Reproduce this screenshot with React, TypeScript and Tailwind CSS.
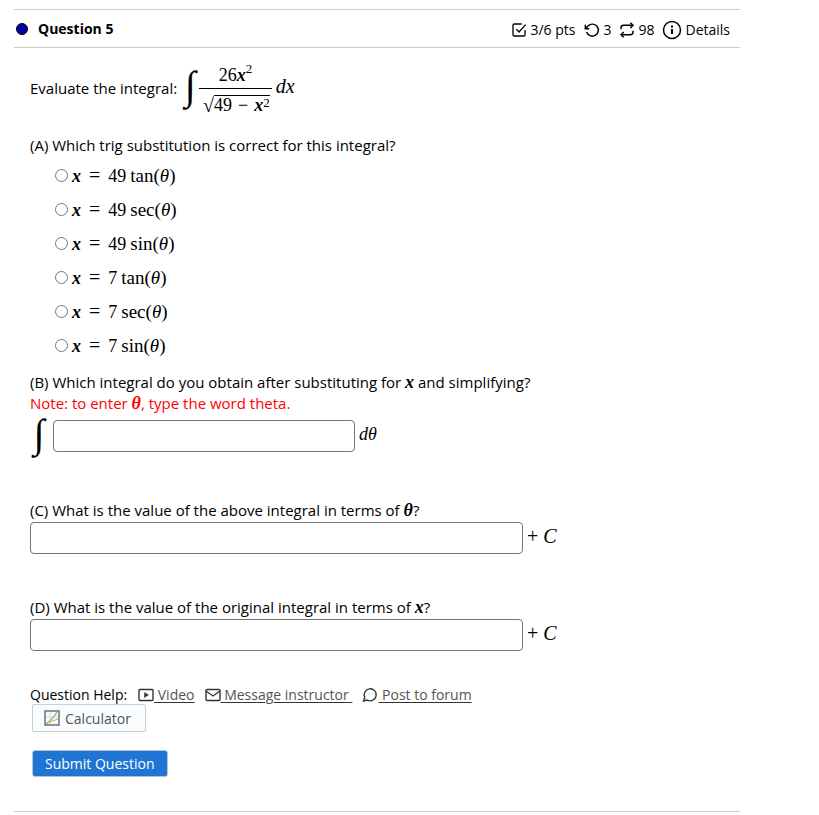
import type { ReactNode } from "react";
import { useState } from "react";

// Answer choices for part (A)
const choices = [
  { coef: "49", fn: "tan" },
  { coef: "49", fn: "sec" },
  { coef: "49", fn: "sin" },
  { coef: "7", fn: "tan" },
  { coef: "7", fn: "sec" },
  { coef: "7", fn: "sin" },
];

const MATH = "font-['Liberation_Serif',serif] leading-none";

function M({ children }: { children: ReactNode }) {
  return <i className={`${MATH} text-[18px] font-bold`}>{children}</i>;
}

function IntegralSign() {
  return (
    <span
      className={`${MATH} flex h-11 w-[18px] shrink-0 items-center justify-center pb-1 text-[40px] italic`}
    >
      ∫
    </span>
  );
}

function CheckSquareIcon() {
  return (
    <svg className="h-4 w-4" viewBox="0 0 24 24" fill="none" stroke="currentColor" strokeWidth="2">
      <path d="M8 11l4 4L22 4" />
      <path d="M21 12v7a2 2 0 0 1-2 2H5a2 2 0 0 1-2-2V5a2 2 0 0 1 2-2h11" />
    </svg>
  );
}

function UndoIcon() {
  return (
    <svg className="h-4 w-4" viewBox="0 0 24 24" fill="none" stroke="currentColor" strokeWidth="2.200">
      <path d="M2 4v6h6" />
      <path d="M4 15a9 9 0 1 0 2-9L2 10" />
    </svg>
  );
}

function RepeatIcon() {
  return (
    <svg className="h-4 w-4" viewBox="0 0 24 24" fill="none" stroke="currentColor" strokeWidth="2.200">
      <path d="M17 1l4 4-4 4" />
      <path d="M3 11V9a4 4 0 0 1 4-4h14" />
      <path d="M7 23l-4-4 4-4" />
      <path d="M21 13v2a4 4 0 0 1-4 4H3" />
    </svg>
  );
}

function InfoIcon() {
  return (
    <svg className="h-5 w-5" viewBox="0 0 20 20" fill="none" stroke="currentColor" strokeWidth="1.500">
      <circle cx="10" cy="10" r="8.500" />
      <path d="M10 9v5" strokeWidth="2" />
      <path d="M10 5.500v2" strokeWidth="2" />
    </svg>
  );
}

function VideoIcon() {
  return (
    <svg className="h-4 w-4" viewBox="0 0 16 16" fill="none" stroke="currentColor" strokeWidth="1.400">
      <rect x="1" y="2.500" width="14" height="11" rx="1" />
      <path d="M6.500 5.500v5l4-2.500z" fill="currentColor" strokeWidth="0.500" />
    </svg>
  );
}

function MailIcon() {
  return (
    <svg className="h-4 w-4" viewBox="0 0 16 16" fill="none" stroke="currentColor" strokeWidth="1.400">
      <rect x="1" y="2.500" width="14" height="11" rx="1" />
      <path d="M1 4l7 5 7-5" />
    </svg>
  );
}

function ForumIcon() {
  return (
    <svg className="h-4 w-4" viewBox="0 0 16 16" fill="none" stroke="currentColor" strokeWidth="1.400">
      <path d="M1.500 14l1.300-3.600a6 6 0 1 1 2.600 2.700z" />
    </svg>
  );
}

function GraphIcon() {
  return (
    <svg className="h-4 w-4" viewBox="0 0 16 16" fill="none">
      <rect x="1" y="1" width="14" height="14" fill="#f8f8fa" stroke="#6b7280" strokeWidth="1.500" />
      <path d="M6 2v12M2 7h12" stroke="#d5d8de" />
      <path d="M2 14c4-3 7-3 12-5" stroke="#f0a070" strokeWidth="1.200" />
      <path d="M2 14c3-2 7-5 11-12" stroke="#6cc46c" strokeWidth="1.200" />
    </svg>
  );
}

function HelpLink({ icon, children }: { icon: ReactNode; children: ReactNode }) {
  return (
    <a href="#" className="flex items-center text-[#333]">
      {icon}
      <span className="whitespace-pre text-[#555] underline decoration-[#333] underline-offset-2">
        {children}
      </span>
    </a>
  );
}

export default function App() {
  const [choice, setChoice] = useState<number | null>(null);

  return (
    <main className="mr-[79px] ml-3.5 pt-[9px] font-['Open_Sans',sans-serif] text-[15px] leading-[21px] text-black">
      {/* Question header */}
      <header className="flex h-[39px] items-center border-y border-[#ccc] pr-2.5">
        <span className="ml-0.5 h-3 w-3 rounded-full border border-black bg-[#0000a8]" />
        <h2 className="ml-2.5 text-[14px] font-bold">Question 5</h2>
        <div className="ml-auto flex items-center pt-0.5 text-[14px]">
          <CheckSquareIcon />
          <span className="ml-[3px]">3/6 pts</span>
          <span className="ml-[9px] flex items-center gap-[3px]">
            <UndoIcon />3
          </span>
          <span className="ml-2 flex items-center gap-[3px]">
            <RepeatIcon />
            98
          </span>
          <button type="button" className="ml-2 flex items-center gap-[3px]">
            <InfoIcon />
            Details
          </button>
        </div>
      </header>

      <form className="pl-4" onSubmit={(e) => e.preventDefault()}>
        {/* Problem statement */}
        <div className="mt-[18px] flex h-11 items-center">
          <span className="mr-1">Evaluate the integral:</span>
          <IntegralSign />
          <span className={`${MATH} flex flex-col items-center text-[18px]`}>
            <span className="flex h-[22px] items-center pb-1">
              26<i className="font-bold">x</i>
              <sup className="text-[13px]">2</sup>
            </span>
            <span className="flex h-[22px] items-start border-t border-black pt-1.5 pr-0.5 pl-1">
              <span className="text-[20px]">√</span>
              <span className="flex items-start gap-1.5 border-t border-black">
                <span>49</span>
                <span>−</span>
                <span className="flex items-start">
                  <i className="font-bold">x</i>
                  <sup className="static text-[13px] leading-none">2</sup>
                </span>
              </span>
            </span>
          </span>
          <i className={`${MATH} ml-1 pb-1 text-[20px]`}>dx</i>
        </div>

        {/* Part A */}
        <fieldset className="mt-[25px]">
          <legend>(A) Which trig substitution is correct for this integral?</legend>
          <div className="mt-0.5 pl-6">
            {choices.map((c, i) => (
              <label key={i} className="flex h-[34px] items-center">
                <input
                  type="radio"
                  name="substitution"
                  checked={choice === i}
                  onChange={() => setChoice(i)}
                  className="mr-1 ml-px h-[13px] w-[13px]"
                />
                <span className={`${MATH} flex items-baseline text-[18px]`}>
                  <i className="font-bold">x</i>
                  <span className="mx-2 text-[20px]">=</span>
                  <span className="mr-1">{c.coef}</span>
                  <span className="text-[19px]">
                    {c.fn}(<i>θ</i>)
                  </span>
                </span>
              </label>
            ))}
          </div>
        </fieldset>

        {/* Part B */}
        <label htmlFor="partB" className="mt-2.5 block">
          (B) Which integral do you obtain after substituting for <M>x</M> and simplifying?
          <span className="block text-[#f00]">
            Note: to enter <M>θ</M>, type the word theta.
          </span>
        </label>
        <div className="mt-1.5 flex h-8 items-center">
          <IntegralSign />
          <input
            id="partB"
            type="text"
            className="ml-[5px] h-8 w-[302px] rounded border border-[#767676] px-2"
          />
          <i className={`${MATH} ml-1 pb-1 text-[18px]`}>dθ</i>
        </div>

        {/* Part C */}
        <label htmlFor="partC" className="mt-12 block">
          (C) What is the value of the above integral in terms of <M>θ</M>?
        </label>
        <div className="mt-px flex h-8 items-center">
          <input id="partC" type="text" className="h-8 w-[493px] rounded border border-[#767676] px-2" />
          <span className={`${MATH} ml-1 pb-1 text-[20px]`}>
            + <i>C</i>
          </span>
        </div>

        {/* Part D */}
        <label htmlFor="partD" className="mt-[43px] block">
          (D) What is the value of the original integral in terms of <M>x</M>?
        </label>
        <div className="mt-px flex h-8 items-center">
          <input id="partD" type="text" className="h-8 w-[493px] rounded border border-[#767676] px-2" />
          <span className={`${MATH} ml-1 pb-1 text-[20px]`}>
            + <i>C</i>
          </span>
        </div>

        {/* Help links */}
        <div className="mt-[34px] flex items-center text-[14px] leading-[19px]">
          <span className="mr-[11px]">Question Help:</span>
          <div className="flex gap-2.5">
            <HelpLink icon={<VideoIcon />}> Video</HelpLink>
            <HelpLink icon={<MailIcon />}> Message instructor </HelpLink>
            <HelpLink icon={<ForumIcon />}> Post to forum</HelpLink>
          </div>
        </div>
        <button
          type="button"
          className="ml-0.5 flex h-7 items-center gap-[5px] rounded-xs border border-[#c4cfd6] bg-[#fafcfd] pr-3.5 pl-[11px] text-[14px] text-[#4b5563]"
        >
          <GraphIcon />
          Calculator
        </button>
        <button
          type="submit"
          className="mt-[18px] ml-0.5 flex h-[27px] items-center rounded-[3px] border border-[#b8c4d0] bg-[#1f75d3] px-3 text-[14px] text-white"
        >
          Submit Question
        </button>
      </form>
      <hr className="mt-[34px] border-[#ccc]" />
    </main>
  );
}
